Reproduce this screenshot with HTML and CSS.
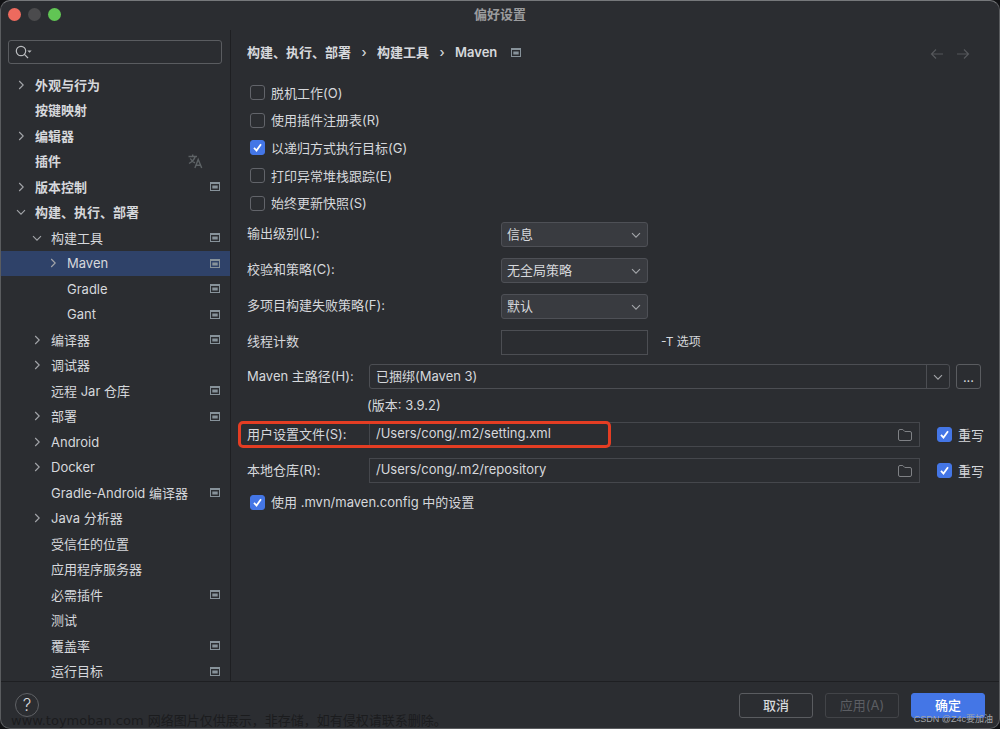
FILE: index.html
```html
<!DOCTYPE html>
<html lang="zh-CN">
<head>
<meta charset="utf-8">
<meta name="viewport" content="width=device-width, initial-scale=1">
<title>偏好设置</title>
<link rel="stylesheet" href="styles.css">
</head>
<body>
<svg class="sprite" aria-hidden="true">
  <symbol id="right" viewBox="0 0 16 16"><path d="M6.2 4 L10.2 8 L6.2 12"/></symbol>
  <symbol id="down" viewBox="0 0 16 16"><path d="M4 6.2 L8 10.2 L12 6.2"/></symbol>
  <symbol id="proj" viewBox="0 0 10 9"><path d="M0 0H10V9H0Z M1 2V8H9V2Z M2.3 3.4H7.7V6.6H2.3Z" fill-rule="evenodd"/></symbol>
  <symbol id="folder" viewBox="0 0 16 14"><path d="M1.5 11V3Q1.5 1.5 3 1.5H5.8L7.8 3.5H13Q14.5 3.5 14.5 5V11Q14.5 12.5 13 12.5H3Q1.5 12.5 1.5 11Z"/></symbol>
</svg>
<div class="window">
  <header class="titlebar">
    <div class="lights">
      <button class="light light-close" aria-label="关闭"></button>
      <button class="light light-min" aria-label="最小化"></button>
      <button class="light light-zoom" aria-label="缩放"></button>
    </div>
    <h1 class="title">偏好设置</h1>
  </header>

  <div class="content">
    <aside class="sidebar">
      <div class="search">
        <svg class="search-icon" viewBox="0 0 18 14" aria-hidden="true"><circle cx="6" cy="6" r="4.7"/><path d="M9.4 9.4 L13 13"/><path class="solid" d="M12.3 5.5H16.7L14.5 7.8Z"/></svg>
        <input class="search-input" type="search" aria-label="搜索">
      </div>
      <ul class="tree" role="tree">
        <li class="row top" role="treeitem"><svg class="chev"><use href="#right"/></svg><span class="name">外观与行为</span></li>
        <li class="row top" role="treeitem"><span class="chev"></span><span class="name">按键映射</span></li>
        <li class="row top" role="treeitem"><svg class="chev"><use href="#right"/></svg><span class="name">编辑器</span></li>
        <li class="row top" role="treeitem"><span class="chev"></span><span class="name">插件</span><svg class="lang" viewBox="0 0 15 15" aria-hidden="true"><path d="M.5 2.5H9 M4.7 .5V2.5 M7.3 2.5Q6 6.5 1 9.5 M2.3 4.5Q4 7.5 7 8.8"/><path d="M6.9 14L10.2 5.5L13.7 14 M8 11.2H12.5"/></svg></li>
        <li class="row top" role="treeitem"><svg class="chev"><use href="#right"/></svg><span class="name">版本控制</span><svg class="proj"><use href="#proj"/></svg></li>
        <li class="row top" role="treeitem" aria-expanded="true"><svg class="chev"><use href="#down"/></svg><span class="name">构建、执行、部署</span></li>
        <li class="row child" role="treeitem" aria-expanded="true"><svg class="chev"><use href="#down"/></svg><span class="name">构建工具</span><svg class="proj"><use href="#proj"/></svg></li>
        <li class="row leaf selected" role="treeitem" aria-selected="true"><svg class="chev"><use href="#right"/></svg><span class="name">Maven</span><svg class="proj"><use href="#proj"/></svg></li>
        <li class="row leaf" role="treeitem"><span class="chev"></span><span class="name">Gradle</span><svg class="proj"><use href="#proj"/></svg></li>
        <li class="row leaf" role="treeitem"><span class="chev"></span><span class="name">Gant</span><svg class="proj"><use href="#proj"/></svg></li>
        <li class="row child" role="treeitem"><svg class="chev"><use href="#right"/></svg><span class="name">编译器</span><svg class="proj"><use href="#proj"/></svg></li>
        <li class="row child" role="treeitem"><svg class="chev"><use href="#right"/></svg><span class="name">调试器</span></li>
        <li class="row child" role="treeitem"><span class="chev"></span><span class="name">远程 Jar 仓库</span><svg class="proj"><use href="#proj"/></svg></li>
        <li class="row child" role="treeitem"><svg class="chev"><use href="#right"/></svg><span class="name">部署</span><svg class="proj"><use href="#proj"/></svg></li>
        <li class="row child" role="treeitem"><svg class="chev"><use href="#right"/></svg><span class="name">Android</span></li>
        <li class="row child" role="treeitem"><svg class="chev"><use href="#right"/></svg><span class="name">Docker</span></li>
        <li class="row child" role="treeitem"><span class="chev"></span><span class="name">Gradle-Android 编译器</span><svg class="proj"><use href="#proj"/></svg></li>
        <li class="row child" role="treeitem"><svg class="chev"><use href="#right"/></svg><span class="name">Java 分析器</span></li>
        <li class="row child" role="treeitem"><span class="chev"></span><span class="name">受信任的位置</span></li>
        <li class="row child" role="treeitem"><span class="chev"></span><span class="name">应用程序服务器</span></li>
        <li class="row child" role="treeitem"><span class="chev"></span><span class="name">必需插件</span><svg class="proj"><use href="#proj"/></svg></li>
        <li class="row child" role="treeitem"><span class="chev"></span><span class="name">测试</span></li>
        <li class="row child" role="treeitem"><span class="chev"></span><span class="name">覆盖率</span><svg class="proj"><use href="#proj"/></svg></li>
        <li class="row child" role="treeitem"><span class="chev"></span><span class="name">运行目标</span><svg class="proj"><use href="#proj"/></svg></li>
      </ul>
    </aside>

    <main class="panel">
      <div class="heading">
        <nav class="crumbs">
          <span>构建、执行、部署</span><span class="sep">›</span><span>构建工具</span><span class="sep">›</span><span>Maven</span>
          <svg class="proj crumb-icon"><use href="#proj"/></svg>
        </nav>
        <div class="history">
          <button class="nav-button" aria-label="后退"><svg viewBox="0 0 14 12"><path d="M13 6H1.5 M6 1.5L1.5 6L6 10.5"/></svg></button>
          <button class="nav-button" aria-label="前进"><svg viewBox="0 0 14 12"><path d="M1 6H12.5 M8 1.5L12.5 6L8 10.5"/></svg></button>
        </div>
      </div>

      <div class="checks">
        <label class="check"><input type="checkbox">脱机工作(O)</label>
        <label class="check"><input type="checkbox">使用插件注册表(R)</label>
        <label class="check"><input type="checkbox" checked>以递归方式执行目标(G)</label>
        <label class="check"><input type="checkbox">打印异常堆栈跟踪(E)</label>
        <label class="check"><input type="checkbox">始终更新快照(S)</label>
      </div>

      <div class="options">
        <label for="level">输出级别(L):</label>
        <div class="select"><select id="level"><option>信息</option></select><svg class="chev"><use href="#down"/></svg></div>
        <label for="checksum">校验和策略(C):</label>
        <div class="select"><select id="checksum"><option>无全局策略</option></select><svg class="chev"><use href="#down"/></svg></div>
        <label for="fail">多项目构建失败策略(F):</label>
        <div class="select"><select id="fail"><option>默认</option></select><svg class="chev"><use href="#down"/></svg></div>
        <label for="threads">线程计数</label>
        <div class="threads"><input class="box" id="threads" type="text"><span class="hint">-T 选项</span></div>
      </div>

      <div class="path home">
        <label class="path-label" for="home">Maven 主路径(H):</label>
        <div class="field combo"><input id="home" type="text" value="已捆绑(Maven 3)"><button class="drop" aria-label="展开"><svg class="chev"><use href="#down"/></svg></button></div>
        <button class="more" aria-label="浏览">...</button>
      </div>
      <p class="version">(版本: 3.9.2)</p>
      <div class="path">
        <label class="path-label" for="settings">用户设置文件(S):</label>
        <div class="field"><input id="settings" type="text" value="/Users/cong/.m2/setting.xml"><button class="browse" aria-label="浏览"><svg class="folder"><use href="#folder"/></svg></button></div>
        <label class="check override"><input type="checkbox" checked>重写</label>
        <span class="highlight"></span>
      </div>
      <div class="path repo">
        <label class="path-label" for="repo">本地仓库(R):</label>
        <div class="field"><input id="repo" type="text" value="/Users/cong/.m2/repository"><button class="browse" aria-label="浏览"><svg class="folder"><use href="#folder"/></svg></button></div>
        <label class="check override"><input type="checkbox" checked>重写</label>
      </div>
      <label class="check config"><input type="checkbox" checked>使用 .mvn/maven.config 中的设置</label>
    </main>
  </div>

  <footer class="footer">
    <button class="help" aria-label="帮助">?</button>
    <div class="actions">
      <button class="button">取消</button>
      <button class="button" disabled>应用(A)</button>
      <button class="button primary">确定</button>
    </div>
  </footer>
  <span class="mark mark-left">www.toymoban.com 网络图片仅供展示，非存储，如有侵权请联系删除。</span>
  <span class="mark mark-right">CSDN @Z4c要加油</span>
</div>
</body>
</html>
```
FILE: styles.css
```css
:root {
  --bg: #2b2d31;
  --text: #d6d8dc;
  --line: #4c4e53;
  --blue: #4476e6;
  --icon: #87929a;
}

* { box-sizing: border-box; }

body {
  margin: 0;
  background: #111214;
  color: var(--text);
  font: 13px/20px Inter, "Noto Sans CJK SC", sans-serif;
}

button, input, select {
  margin: 0;
  padding: 0;
  border: 0;
  background: none;
  color: inherit;
  font: inherit;
}

svg { display: block; flex: none; }
.sprite { position: absolute; width: 0; height: 0; }

.window {
  position: relative;
  display: flex;
  flex-direction: column;
  height: 100vh;
  min-height: 600px;
  overflow: hidden;
  border: 1px solid #5a5c5f;
  border-top-color: #76787b;
  border-radius: 10px;
  background: var(--bg);
}

.titlebar {
  display: grid;
  grid-template-columns: 1fr auto 1fr;
  align-items: center;
  height: 29px;
  padding: 0 7px 3px;
}
.lights { display: flex; gap: 7px; }
.light { width: 13px; height: 13px; border-radius: 50%; }
.light-close { background: #ed6a5e; }
.light-min { background: #4b4b4d; }
.light-zoom { background: #61c554; }
.title { margin: 0; padding-bottom: 1px; color: #9b9c9e; font-size: 13px; font-weight: 700; }

.content { display: flex; flex: 1; min-height: 0; }

.sidebar {
  display: flex;
  flex-direction: column;
  width: 230px;
  padding-top: 10px;
  overflow: hidden;
  border-right: 1px solid #1e1f22;
}
.search {
  display: flex;
  align-items: center;
  height: 24px;
  margin: 0 8px 8px 7px;
  padding-left: 6px;
  border: 1px solid #5a5c60;
  border-radius: 3px;
}
.search-icon { width: 18px; height: 14px; fill: none; stroke: #b9bbbe; stroke-width: 1.2; }
.search-icon .solid { fill: #b9bbbe; stroke: none; }
.search-input { flex: 1; min-width: 0; outline: 0; }

.tree {
  display: flex;
  flex: 1;
  flex-direction: column;
  margin: 0 0 -3px;
  padding: 0;
  list-style: none;
}
.row {
  display: flex;
  flex: 1;
  align-items: center;
  gap: 6px;
  min-height: 0;
  padding: 0 10px 0 12px;
  white-space: nowrap;
}
.top { font-weight: 600; }
.child { padding-left: 28px; }
.leaf { padding-left: 44px; }
.selected { background: #2f4269; }
.name { flex: 1; }
.chev { flex: none; width: 16px; height: 16px; fill: none; stroke: #a4a6aa; stroke-width: 1.1; }
.proj { width: 10px; height: 9px; fill: var(--icon); }
.lang { width: 15px; height: 15px; margin-right: 17px; fill: none; stroke: #5d6265; stroke-width: 1.4; }

.panel { flex: 1; min-width: 0; padding: 12px 15px 0 16px; }

.heading { display: flex; align-items: center; justify-content: space-between; padding-right: 14px; }
.crumbs { display: flex; align-items: center; font-weight: 600; }
.sep { width: 26px; text-align: center; font-weight: 500; }
.crumb-icon { margin-left: 14px; }
.history { display: flex; gap: 12px; padding-top: 4px; }
.nav-button svg { width: 14px; height: 12px; fill: none; stroke: #55575b; stroke-width: 1.2; }

.checks { display: grid; grid-auto-rows: 1fr; min-height: 138px; margin: 17px 0 5px 3px; }
.check { display: flex; align-items: center; gap: 6px; white-space: nowrap; }
.check input {
  flex: none;
  width: 15px;
  height: 15px;
  appearance: none;
  border: 1px solid #62646a;
  border-radius: 3px;
}
.check input:checked {
  border-color: var(--blue);
  background: var(--blue) url("data:image/svg+xml,%3Csvg xmlns='http://www.w3.org/2000/svg' viewBox='0 0 13 13'%3E%3Cpath d='M3 6.8L5.5 9.5L10 3.3' fill='none' stroke='white' stroke-width='1.8'/%3E%3C/svg%3E");
}

.options { display: grid; grid-template-columns: 254px 1fr; align-items: center; gap: 11px 0; }
.options > label { padding-bottom: 3px; }
.select { position: relative; width: 147px; }
.select select {
  display: block;
  width: 100%;
  height: 25px;
  padding: 0 24px 1px 5px;
  appearance: none;
  border: 1px solid #4e5056;
  border-radius: 3px;
  background: #393b40;
}
.select .chev { position: absolute; top: 5px; right: 4px; pointer-events: none; }
.threads { display: flex; align-items: center; gap: 13px; }
.box { width: 147px; height: 25px; border: 1px solid var(--line); }
.hint { padding-bottom: 2px; font-size: 12px; }

.path { position: relative; display: flex; align-items: center; }
.path-label { flex: none; width: 122px; padding-bottom: 1px; white-space: nowrap; }
.field { display: flex; flex: 1; align-items: center; min-width: 0; height: 25px; border: 1px solid #45474c; }
.field input { flex: 1; min-width: 0; height: 100%; padding: 0 0 3px 6px; outline: 0; }
.home { margin-top: 9px; padding-right: 3px; }
.combo { border-color: var(--line); border-radius: 3px; }
.drop { display: flex; align-items: center; justify-content: center; width: 23px; height: 100%; border-left: 1px solid var(--line); }
.more { width: 25px; height: 25px; margin-left: 6px; border: 1px solid #5a5c60; border-radius: 3px; }
.browse { padding: 0 6px; }
.folder { width: 16px; height: 14px; fill: none; stroke: #7f8185; }
.version { margin: 6px 0 7px 120px; }
.override { margin-left: 17px; }
.repo { margin: 11px 0 9px; }
.config { margin-left: 3px; }
.highlight {
  position: absolute;
  top: -1px;
  left: -9px;
  width: 373px;
  height: 27px;
  border: 3px solid #e43d23;
  border-radius: 5px;
  pointer-events: none;
}

.footer {
  display: flex;
  align-items: center;
  justify-content: space-between;
  height: 47px;
  padding: 0 14px;
  border-top: 1px solid #1e1f22;
}
.help { width: 24px; height: 24px; border: 1px solid #5f6165; border-radius: 50%; font-size: 17px; font-weight: 300; }
.actions { display: flex; gap: 12px; }
.button { width: 74px; height: 25px; border: 1px solid #5a5c60; border-radius: 3px; font-weight: 500; }
.button:disabled { border-color: #424448; color: #5c5e63; font-weight: 400; }
.primary { border-color: var(--blue); background: var(--blue); color: #fff; }

.mark { position: absolute; white-space: nowrap; pointer-events: none; }
.mark-left { bottom: -3px; left: 10px; color: #1b1c1e; font-family: "DejaVu Sans", "Noto Sans CJK SC", sans-serif; }
.mark-right { right: 6px; bottom: -1px; color: #a3a6ab; font-family: "Liberation Sans", "Noto Sans CJK SC", sans-serif; font-size: 9px; }
```
